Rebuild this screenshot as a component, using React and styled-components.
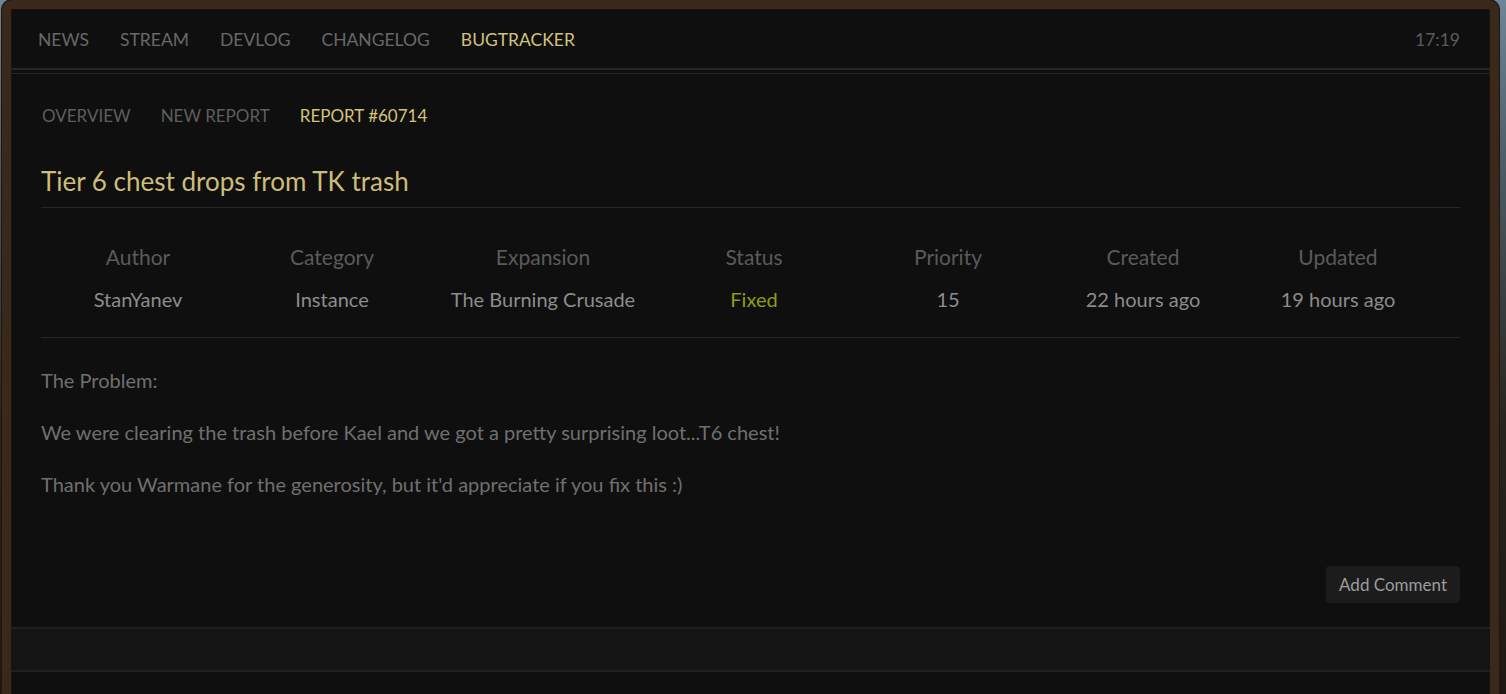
import React from "react";
import styled, { createGlobalStyle } from "styled-components";

const Global = createGlobalStyle`
  html, body { margin: 0; padding: 0; }
  body {
    width: 1506px;
    height: 694px;
    overflow: hidden;
    background: linear-gradient(180deg, #6d8697 0%, #4b5a63 25%, #2a241e 60%, #1f1812 100%);
    font-family: "Lato", "Noto Sans", sans-serif;
  }
`;

const Frame = styled.div`
  box-sizing: border-box;
  margin-left: 2px;
  width: 1497px;
  height: 710px;
  border: 9px solid #3a281b;
  border-bottom: none;
  border-radius: 10px 10px 0 0;
  box-shadow: inset 0 0 0 1px #1a120c, 0 0 0 1px #20160f;
  background: #0f0f0f;
  display: flex;
  flex-direction: column;
`;

const TopNav = styled.nav`
  height: 61px;
  box-sizing: border-box;
  padding: 2px 30px 0 27px;
  display: flex;
  align-items: center;
  gap: 31px;
  border-bottom: 2px solid #252525;
  position: relative;
  &::after {
    content: "";
    position: absolute;
    left: 0;
    right: 0;
    bottom: -6px;
    height: 1px;
    background: #252525;
  }
`;

const NavItem = styled.a`
  font-size: 17.5px;
  text-transform: uppercase;
  color: ${(p) => (p.$active ? "#d3c27c" : "#686868")};
  text-decoration: none;
`;

const Clock = styled.span`
  margin-left: auto;
  font-size: 17.5px;
  color: #5c5c5c;
`;

const Content = styled.main`
  padding: 0 30px;
  margin-top: 6px;
  display: flex;
  flex-direction: column;
`;

const SubNav = styled.div`
  display: flex;
  gap: 30px;
  height: 72px;
  padding-top: 6px;
  box-sizing: border-box;
  align-items: center;
  padding-left: 1px;
`;

const SubItem = styled.a`
  font-size: 17px;
  text-transform: uppercase;
  color: ${(p) => (p.$active ? "#d3c27c" : "#5e5e5e")};
  text-decoration: none;
`;

const Title = styled.h1`
  margin: 0;
  font-weight: 400;
  font-size: 26px;
  color: #cdbd79;
  height: 60px;
  padding-top: 6px;
  display: flex;
  align-items: center;
  border-bottom: 1px solid #262626;
  box-sizing: border-box;
`;

const InfoGrid = styled.div`
  display: grid;
  grid-template-columns: 194px 194px 228px 194px 194px 196px 194px;
  row-gap: 18px;
  padding: 37px 0 26px;
  border-bottom: 1px solid #262626;
`;

const Head = styled.div`
  text-align: center;
  font-size: 21px;
  color: #5a5a5a;
  line-height: 24px;
`;

const Value = styled.div`
  text-align: center;
  font-size: 20px;
  line-height: 24px;
  color: ${(p) => p.$color || "#8c8c8c"};
`;

const Body = styled.div`
  padding-top: 31px;
  display: flex;
  flex-direction: column;
  gap: 29px;
`;

const Para = styled.p`
  margin: 0;
  font-size: 20px;
  line-height: 23px;
  color: #6f6f6f;
`;

const Actions = styled.div`
  display: flex;
  justify-content: flex-end;
  padding-top: 70px;
  padding-bottom: 24px;
`;

const Button = styled.button`
  background: #1c1c1c;
  border: none;
  border-radius: 4px;
  height: 37px;
  padding: 0 13px;
  font-family: inherit;
  font-size: 17px;
  color: #9c9c9c;
`;

const Band = styled.div`
  height: 41px;
  background: #141414;
  border-top: 2px solid #202020;
  border-bottom: 2px solid #202020;
`;

const rows = [
  ["Author", "StanYanev"],
  ["Category", "Instance"],
  ["Expansion", "The Burning Crusade"],
  ["Status", "Fixed", "#8f9d10"],
  ["Priority", "15"],
  ["Created", "22 hours ago"],
  ["Updated", "19 hours ago"],
];

export default function App() {
  return (
    <>
      <Global />
      <Frame>
        <TopNav>
          <NavItem>News</NavItem>
          <NavItem>Stream</NavItem>
          <NavItem>Devlog</NavItem>
          <NavItem>Changelog</NavItem>
          <NavItem $active>Bugtracker</NavItem>
          <Clock>17:19</Clock>
        </TopNav>
        <Content>
          <SubNav>
            <SubItem>Overview</SubItem>
            <SubItem>New Report</SubItem>
            <SubItem $active>Report #60714</SubItem>
          </SubNav>
          <Title>Tier 6 chest drops from TK trash</Title>
          <InfoGrid>
            {rows.map(([h]) => (
              <Head key={h}>{h}</Head>
            ))}
            {rows.map(([h, v, c]) => (
              <Value key={h} $color={c}>
                {v}
              </Value>
            ))}
          </InfoGrid>
          <Body>
            <Para>The Problem:</Para>
            <Para>
              We were clearing the trash before Kael and we got a pretty surprising loot...T6 chest!
            </Para>
            <Para>Thank you Warmane for the generosity, but it'd appreciate if you fix this :)</Para>
          </Body>
          <Actions>
            <Button>Add Comment</Button>
          </Actions>
        </Content>
        <Band />
      </Frame>
    </>
  );
}
